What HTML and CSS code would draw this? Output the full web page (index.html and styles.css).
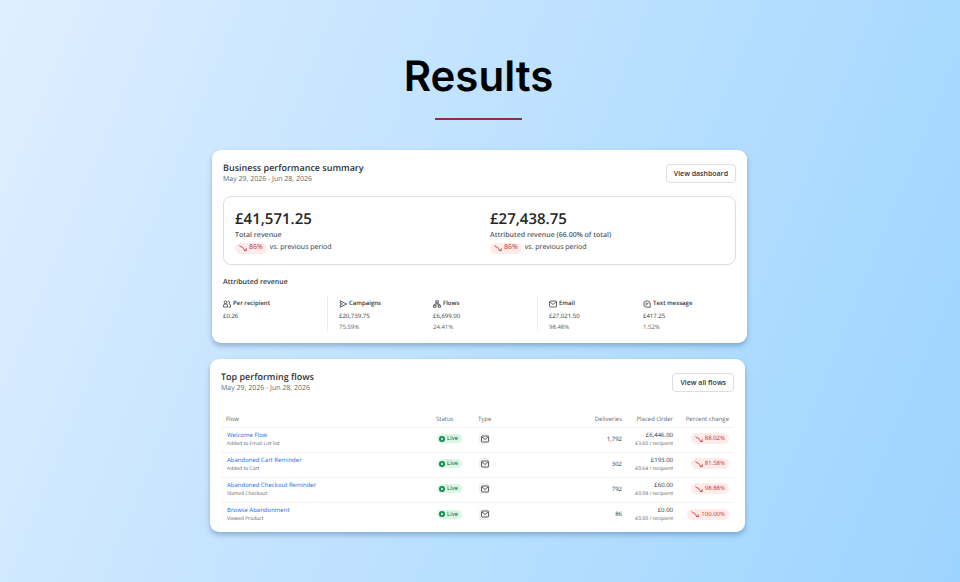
FILE: index.html
```html
<!DOCTYPE html>
<html lang="en">
<head>
	<meta charset="utf-8">
	<meta name="viewport" content="width=device-width, initial-scale=1">
	<title>Results</title>
	<link rel="stylesheet" href="styles.css">
</head>
<body>
	<svg class="sprite" width="0" height="0">
		<symbol id="down" viewBox="0 0 16 16"><path d="M1 2.500l2.500 3.500h3.500l3 5.500 4.500 1.500M14.500 8.500v4.500h-4.500"/></symbol>
		<symbol id="mail" viewBox="0 0 16 16"><rect x="1" y="2" width="14" height="12" rx="1.500"/><path d="M2 4l6 5 6-5"/></symbol>
		<symbol id="people" viewBox="0 0 16 16"><circle cx="5" cy="4.500" r="2.800"/><path d="M1 14V11q0-3 3-3h2q3 0 3 3v3zM9.500 2.500q3-1 3.500 1.500.5 2-1 3.500 3 .5 3 3.500v3h-4"/></symbol>
		<symbol id="send" viewBox="0 0 16 16"><path d="M2 1.500L15 8 2 14.500 4 8zM4 8h4"/></symbol>
		<symbol id="tree" viewBox="0 0 16 16"><path d="M5.500 1.500h5v4h-5zM1 10.500h5v4H1zM10 10.500h5v4h-5zM8 5.500V8M3.500 10.500V8h9v2.500"/></symbol>
		<symbol id="chat" viewBox="0 0 16 16"><path d="M14.500 14.500H8A6.500 6.500 0 1 1 14.500 8zM5 6.500h6M5 9.500h4"/></symbol>
	</svg>

	<main class="page">
		<h1 class="title">Results</h1>

		<section class="card summary">
			<header class="card-head">
				<div>
					<h2>Business performance summary</h2>
					<p class="dates">May 29, 2026 - Jun 28, 2026</p>
				</div>
				<button type="button" class="btn">View dashboard</button>
			</header>
			<div class="totals">
				<div>
					<p class="amount">£41,571.25</p>
					<p class="label">Total revenue</p>
					<p class="compare"><span class="drop"><svg class="icon"><use href="#down"/></svg>86%</span> vs. previous period</p>
				</div>
				<div>
					<p class="amount">£27,438.75</p>
					<p class="label">Attributed revenue (66.00% of total)</p>
					<p class="compare"><span class="drop"><svg class="icon"><use href="#down"/></svg>86%</span> vs. previous period</p>
				</div>
			</div>
			<h3>Attributed revenue</h3>
			<div class="channels">
				<div class="group">
					<div>
						<h4><svg class="icon"><use href="#people"/></svg>Per recipient</h4>
						<p>£0.26</p>
					</div>
				</div>
				<div class="group pair">
					<div>
						<h4><svg class="icon"><use href="#send"/></svg>Campaigns</h4>
						<p>£20,739.75</p>
						<p class="share">75.59%</p>
					</div>
					<div>
						<h4><svg class="icon"><use href="#tree"/></svg>Flows</h4>
						<p>£6,699.00</p>
						<p class="share">24.41%</p>
					</div>
				</div>
				<div class="group pair">
					<div>
						<h4><svg class="icon"><use href="#mail"/></svg>Email</h4>
						<p>£27,021.50</p>
						<p class="share">98.48%</p>
					</div>
					<div>
						<h4><svg class="icon"><use href="#chat"/></svg>Text message</h4>
						<p>£417.25</p>
						<p class="share">1.52%</p>
					</div>
				</div>
			</div>
		</section>

		<section class="card flows">
			<header class="card-head">
				<div>
					<h2>Top performing flows</h2>
					<p class="dates">May 29, 2026 - Jun 28, 2026</p>
				</div>
				<button type="button" class="btn">View all flows</button>
			</header>
			<table class="flow-table">
				<thead>
					<tr>
						<th class="col-flow">Flow</th>
						<th class="col-status">Status</th>
						<th class="col-type">Type</th>
						<th class="col-num">Deliveries</th>
						<th class="col-order">Placed Order</th>
						<th class="col-change">Percent change</th>
					</tr>
				</thead>
				<tbody>
					<tr>
						<td><a href="#">Welcome Flow</a><small>Added to Email List list</small></td>
						<td><span class="live"><svg class="icon play" viewBox="0 0 16 16"><circle cx="8" cy="8" r="8"/><path d="M6 4l6 4-6 4z"/></svg>Live</span></td>
						<td><span class="type"><svg class="icon"><use href="#mail"/></svg></span></td>
						<td class="num">1,792</td>
						<td class="num">£6,446.00<small>£3.60 / recipient</small></td>
						<td class="num"><span class="drop"><svg class="icon"><use href="#down"/></svg>88.02%</span></td>
					</tr>
					<tr>
						<td><a href="#">Abandoned Cart Reminder</a><small>Added to Cart</small></td>
						<td><span class="live"><svg class="icon play" viewBox="0 0 16 16"><circle cx="8" cy="8" r="8"/><path d="M6 4l6 4-6 4z"/></svg>Live</span></td>
						<td><span class="type"><svg class="icon"><use href="#mail"/></svg></span></td>
						<td class="num">302</td>
						<td class="num">£193.00<small>£0.64 / recipient</small></td>
						<td class="num"><span class="drop"><svg class="icon"><use href="#down"/></svg>81.58%</span></td>
					</tr>
					<tr>
						<td><a href="#">Abandoned Checkout Reminder</a><small>Started Checkout</small></td>
						<td><span class="live"><svg class="icon play" viewBox="0 0 16 16"><circle cx="8" cy="8" r="8"/><path d="M6 4l6 4-6 4z"/></svg>Live</span></td>
						<td><span class="type"><svg class="icon"><use href="#mail"/></svg></span></td>
						<td class="num">792</td>
						<td class="num">£60.00<small>£0.08 / recipient</small></td>
						<td class="num"><span class="drop"><svg class="icon"><use href="#down"/></svg>98.88%</span></td>
					</tr>
					<tr>
						<td><a href="#">Browse Abandonment</a><small>Viewed Product</small></td>
						<td><span class="live"><svg class="icon play" viewBox="0 0 16 16"><circle cx="8" cy="8" r="8"/><path d="M6 4l6 4-6 4z"/></svg>Live</span></td>
						<td><span class="type"><svg class="icon"><use href="#mail"/></svg></span></td>
						<td class="num">86</td>
						<td class="num">£0.00<small>£0.00 / recipient</small></td>
						<td class="num"><span class="drop"><svg class="icon"><use href="#down"/></svg>100.00%</span></td>
					</tr>
				</tbody>
			</table>
		</section>
	</main>
</body>
</html>
```

FILE: styles.css
```css
*{box-sizing: border-box;}
html{min-height: 100%; background: linear-gradient(112deg, #e0efff 0%, #c8e5ff 32%, #b5deff 62%, #9dd4ff 100%);}
body{margin: 0; font-family: "Open Sans", "Noto Sans", sans-serif; font-size: 7px; line-height: 10px; color: #303235; text-rendering: geometricPrecision;}
h1,h2,h3,h4,p{margin: 0;}
.sprite{display: none;}
.icon{width: 8px; height: 8px; flex: none; fill: none; stroke: currentColor; stroke-width: 1.5;}

.page{max-width: 540px; margin: 0 auto; padding: 49px 3px 48px 0;}
.title{margin-bottom: 30px; color: #000; font: 600 42px/56px Inter, sans-serif; text-align: center;}
.title::after{content: ""; display: block; width: 87px; height: 2px; margin: 13px auto 0; background-color: #942f38;}

.card{padding: 11px 11px 12px; border-radius: 9px; background-color: #fff; box-shadow: 0 3px 5px rgba(40, 80, 120, .35);}
.summary{margin: 0 0 16px 2px;}
.flows{margin-right: 2px; padding-bottom: 5px;}
.card-head{display: flex; justify-content: space-between; align-items: center;}
h2{font-size: 9px; font-weight: 600; line-height: 13px;}
.dates{color: #66696d; line-height: 12px;}
.btn{height: 19px; padding: 0 7px; border: 1px solid #dcdee0; border-radius: 4px; background-color: #fff; color: #303235; font: 600 7px/10px "Open Sans", sans-serif;}

.totals{display: grid; grid-template-columns: 1fr 1fr; column-gap: 21px; margin-top: 10px; padding: 12px 11px 10px; border: 1px solid #dcdee0; border-radius: 8px;}
.amount{color: #232426; font-size: 15px; font-weight: 600; line-height: 21px;}
.label{font-weight: 600; line-height: 12px; color: #55585c;}
.compare{display: flex; align-items: center; gap: 3px; line-height: 12px;}
.drop{display: inline-flex; align-items: center; gap: 2px; height: 11px; padding: 0 4px; border-radius: 6px; background-color: #ffecea; color: #bd3038;}

h3{margin: 13px 0 8px; font-size: 7px; font-weight: 600; line-height: 10px;}
.channels{display: grid; grid-template-columns: 104px 210px 1fr; line-height: 11px;}
.group{height: 35px; padding-top: 2px;}
.group + .group{padding-left: 11px; border-left: 1px solid #ebecee;}
.pair{display: grid; grid-template-columns: 94px 1fr;}
h4{display: flex; align-items: center; gap: 2px; margin-bottom: 2px; font-size: 6px; font-weight: 600; line-height: 11px;}
.channels p{font-size: 6px;}
.share{color: #5d6064;}

.flow-table{width: 100%; margin-top: 17px; border-collapse: collapse; table-layout: fixed;}
th{height: 15px; padding: 0 5px; color: #66696d; font-size: 6px; font-weight: 400; line-height: 10px; text-align: left; white-space: nowrap;}
td{height: 25px; padding: 0 6px; border-top: 1px solid #f2f3f4; font-size: 6px; line-height: 9px; white-space: nowrap;}
td a{color: #2468df; text-decoration: none;}
small{display: block; color: #606367; font-size: 5px; line-height: 8px;}
.col-flow{width: 210px;}
.col-status{width: 42px;}
.col-type{width: 40px;}
.col-order{width: 51px;}
.col-change{width: 56px;}
.col-num,.col-order,.col-change,.num{text-align: right;}
.num{padding-right: 5px;}
.live{display: inline-flex; align-items: center; gap: 2px; height: 9px; padding: 0 4px 0 2px; border-radius: 5px; background-color: #d8f8e3; color: #214e36;}
.play{width: 6px; height: 6px; fill: #148653; stroke: none;}
.play path{fill: #fff;}
.type{display: inline-flex; align-items: center; justify-content: center; width: 11px; height: 11px; border-radius: 3px; background-color: #f0f1f2;}
```
